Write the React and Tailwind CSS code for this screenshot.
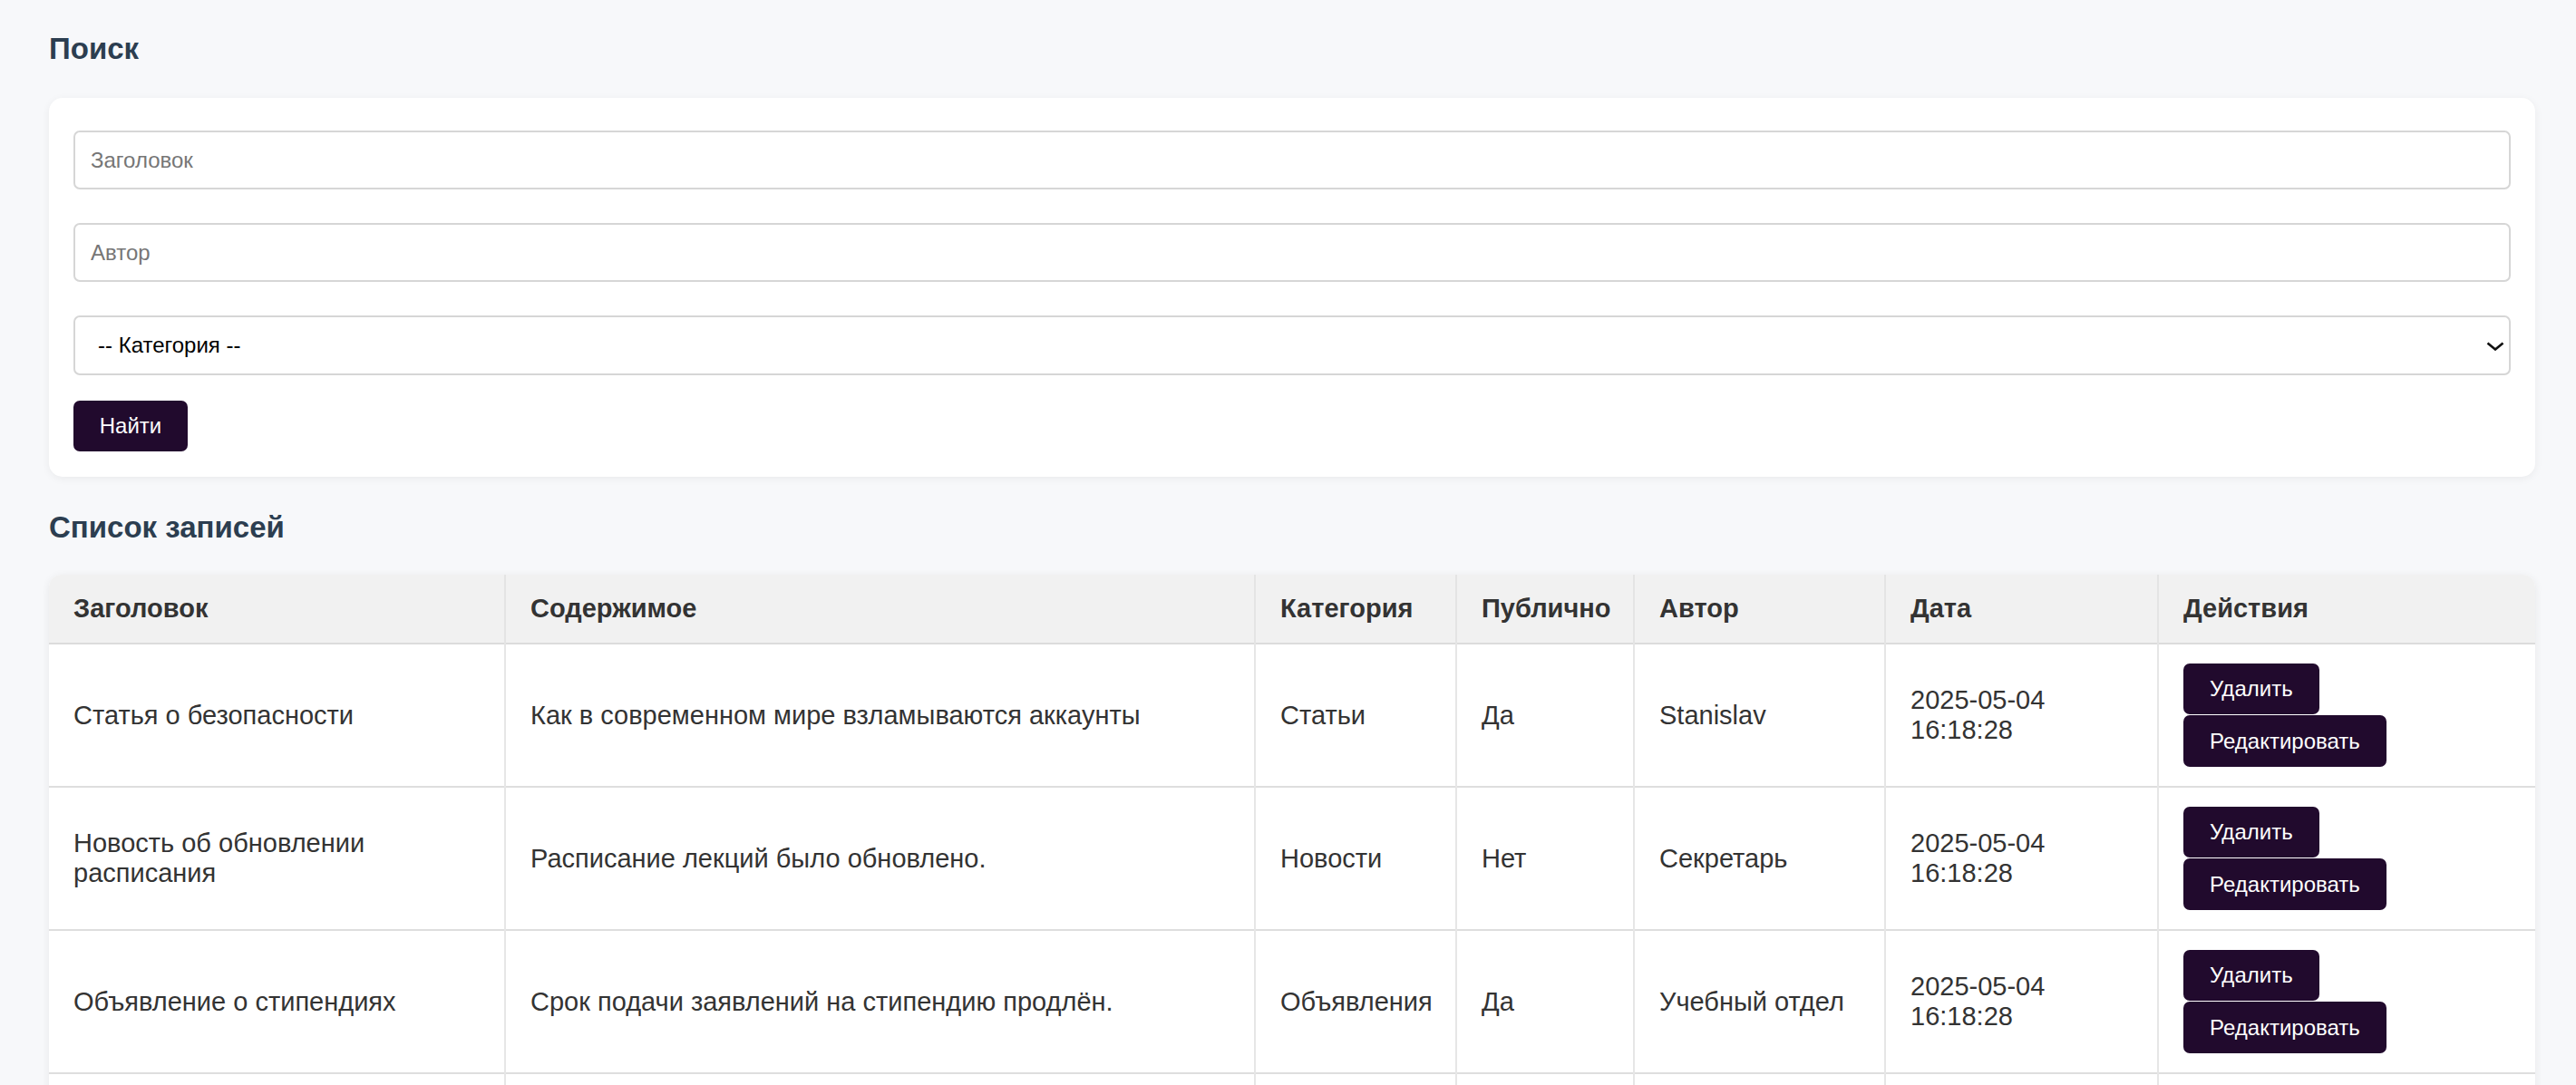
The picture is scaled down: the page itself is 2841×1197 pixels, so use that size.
import React from "react";

const rows = [
  {
    title: "Статья о безопасности",
    content: "Как в современном мире взламываются аккаунты",
    category: "Статьи",
    pub: "Да",
    author: "Stanislav",
  },
  {
    title: "Новость об обновлении расписания",
    content: "Расписание лекций было обновлено.",
    category: "Новости",
    pub: "Нет",
    author: "Секретарь",
  },
  {
    title: "Объявление о стипендиях",
    content: "Срок подачи заявлений на стипендию продлён.",
    category: "Объявления",
    pub: "Да",
    author: "Учебный отдел",
  },
  {
    title: "Конференция студентов",
    content: "Приглашаем всех на ежегодную конференцию.",
    category: "Новости",
    pub: "Да",
    author: "Stanislav",
  },
];

const headers = ["Заголовок", "Содержимое", "Категория", "Публично", "Автор", "Дата", "Действия"];
const widths = ["w-[503px]", "w-[827px]", "w-[222px]", "w-[196px]", "w-[277px]", "w-[301px]", "w-[416px]"];

function Btn({ children, className = "" }) {
  return (
    <button
      className={
        "bg-[#210a2d] text-white text-[24px] leading-[28px] px-[29px] rounded-[7px] " + className
      }
    >
      {children}
    </button>
  );
}

export default function App() {
  return (
    <div className="min-h-screen bg-[#f7f8fa] pl-[54px] pr-[45px] pt-[35px] pb-[40px] font-['Liberation_Sans',Arial,sans-serif]">
      <h2 className="text-[33px] leading-[38px] font-bold text-[#2c3e50]">Поиск</h2>

      <div className="mt-[35px] bg-white rounded-[15px] shadow-[0_2px_10px_rgba(0,0,0,0.06)] px-[27px] pt-[36px] pb-[28px] flex flex-col items-start">
        <input
          placeholder="Заголовок"
          className="w-full h-[65px] border-2 border-[#d6d6d6] rounded-[7px] pl-[17px] text-[24px] text-black placeholder:text-[#767676] outline-none"
        />
        <input
          placeholder="Автор"
          className="mt-[37px] w-full h-[65px] border-2 border-[#d6d6d6] rounded-[7px] pl-[17px] text-[24px] text-black placeholder:text-[#767676] outline-none"
        />
        <div className="relative mt-[37px] w-full">
          <select className="appearance-none w-full h-[66px] border-2 border-[#d6d6d6] rounded-[7px] pl-[25px] text-[24px] text-black bg-white outline-none">
            <option>-- Категория --</option>
          </select>
          <svg
            className="absolute right-[7px] top-[29px] pointer-events-none"
            width="20"
            height="10"
            viewBox="0 0 20 10"
            fill="none"
          >
            <path d="M1.5 1.5 L10 8.5 L18.5 1.5" stroke="#111" strokeWidth="2.6" />
          </svg>
        </div>
        <button className="mt-[28px] h-[56px] w-[126px] bg-[#210a2d] text-white text-[24px] rounded-[7px]">
          Найти
        </button>
      </div>

      <h2 className="mt-[37px] text-[33px] leading-[38px] font-bold text-[#2c3e50]">Список записей</h2>

      <div className="mt-[33px] bg-white rounded-[14px] overflow-hidden shadow-[0_2px_10px_rgba(0,0,0,0.07)]">
        <table className="w-full border-collapse table-fixed text-[29px] leading-[33px] text-[#333]">
          <thead>
            <tr className="bg-[#f1f1f1] border-b-2 border-[#dcdcdc]">
              {headers.map((h, i) => (
                <th
                  key={h}
                  className={
                    widths[i] +
                    " text-left font-bold py-[21px] px-[27px] " +
                    (i < headers.length - 1 ? "border-r-2 border-[#e4e4e4]" : "")
                  }
                >
                  {h}
                </th>
              ))}
            </tr>
          </thead>
          <tbody>
            {rows.map((r, idx) => (
              <tr key={idx} className="border-b-2 border-[#dedede]">
                {[r.title, r.content, r.category, r.pub, r.author].map((c, i) => (
                  <td key={i} className="align-middle px-[27px] py-[21px] border-r-2 border-[#e6e6e6]">
                    {c}
                  </td>
                ))}
                <td className="align-middle px-[27px] py-[21px] border-r-2 border-[#e6e6e6]">
                  2025-05-04
                  <br />
                  16:18:28
                </td>
                <td className="align-middle px-[27px] py-[21px]">
                  <div className="flex flex-col items-start gap-[1px]">
                    <Btn className="h-[56px]">Удалить</Btn>
                    <Btn className="h-[57px]">Редактировать</Btn>
                  </div>
                </td>
              </tr>
            ))}
          </tbody>
        </table>
      </div>
    </div>
  );
}
